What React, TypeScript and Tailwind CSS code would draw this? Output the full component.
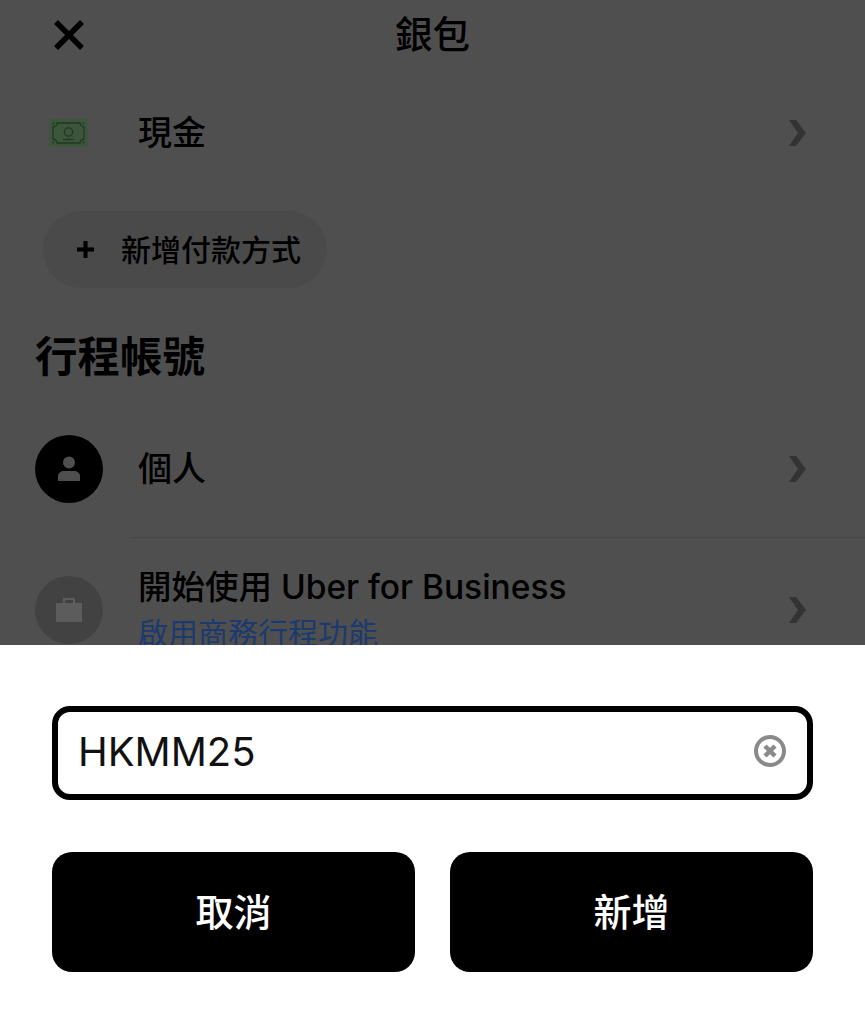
import { X, Plus } from "lucide-react"

const font = { fontFamily: '"Inter", "Noto Sans CJK TC", sans-serif' }

function Chevron() {
  return (
    <svg width="22" height="28" viewBox="0 0 22 28" className="shrink-0">
      <path d="M3 1h7l10 13-10 13H3l9-13z" fill="#333333" />
    </svg>
  )
}

function CashIcon() {
  return (
    <svg width="39" height="28" viewBox="0 0 39 28" className="shrink-0">
      <rect width="39" height="28" fill="#3c553c" />
      <path d="M8 4h23c0 2 1.500 3.500 4 4v12c-2.500 .5-4 2-4 4H8c0-2-1.500-3.500-4-4V8c2.500-.5 4-2 4-4z" fill="none" stroke="#1f3a1f" strokeWidth="1.3" />
      <circle cx="19.500" cy="13" r="4.200" fill="none" stroke="#1f3a1f" strokeWidth="1.300" />
      <path d="M14 20.500h11" stroke="#1f3a1f" strokeWidth="1.300" />
      <g fill="#1f3a1f">
        <circle cx="4.500" cy="4.500" r="1" />
        <circle cx="34.500" cy="4.500" r="1" />
        <circle cx="4.500" cy="23.500" r="1" />
        <circle cx="34.500" cy="23.500" r="1" />
      </g>
    </svg>
  )
}

export default function App() {
  return (
    <div className="w-[865px] h-[1024px] flex flex-col bg-white overflow-hidden" style={font}>
      <div className="h-[645px] bg-[#4f4f4f] overflow-hidden shrink-0 text-black">
        <div className="relative h-[70px] flex items-center justify-center">
          <X className="absolute left-[47px] top-[13px] w-[44px] h-[44px]" strokeWidth={3} strokeLinecap="square" color="#000" />
          <h1 className="text-[37.5px] leading-[70px] font-medium">銀包</h1>
        </div>

        <div className="h-[66px] mt-[30px] flex items-center pl-[49px] pr-[57px]">
          <CashIcon />
          <span className="ml-[50px] text-[34px] leading-none font-medium flex-1">現金</span>
          <Chevron />
        </div>

        <div className="mt-[45px] ml-[43px] w-[284px] h-[77px] rounded-full bg-[#4a4a4a] flex items-center pl-[28px]">
          <Plus className="w-[29px] h-[29px] shrink-0" strokeWidth={3.4} strokeLinecap="butt" color="#000" />
          <span className="ml-[21px] text-[30px] leading-none font-medium whitespace-nowrap">新增付款方式</span>
        </div>

        <h2 className="mt-[39px] ml-[35px] text-[42.5px] leading-[60px] font-bold">行程帳號</h2>

        <div className="mt-[48px] h-[68px] flex items-center pl-[35px] pr-[57px]">
          <div className="w-[68px] h-[68px] rounded-full bg-black flex items-center justify-center shrink-0">
            <svg width="24" height="26" viewBox="0 0 24 26">
              <circle cx="12" cy="6.500" r="6" fill="#4f4f4f" />
              <path d="M1 25v-5c0-3 3-5 6-5h10c3 0 6 2 6 5v5z" fill="#4f4f4f" />
            </svg>
          </div>
          <span className="ml-[35px] text-[34px] leading-none font-medium flex-1">個人</span>
          <Chevron />
        </div>

        <div className="mt-[34px] ml-[130px] h-px bg-[#474747]" />

        <div className="mt-[38px] h-[68px] flex items-center pl-[35px] pr-[57px]">
          <div className="w-[68px] h-[68px] rounded-full bg-[#424242] flex items-center justify-center shrink-0">
            <svg width="26" height="24" viewBox="0 0 26 24">
              <path d="M0 5h7V0h12v5h7v19H0zM9 2v3h8V2z" fill="#5c5c5c" fillRule="evenodd" />
            </svg>
          </div>
          <div className="ml-[35px] flex-1 -mt-[1px]">
            <div className="text-[33.5px] leading-[46px] font-medium whitespace-nowrap">開始使用 Uber for Business</div>
            <div className="text-[30px] leading-[46px] text-[#1c3a6e] whitespace-nowrap">啟用商務行程功能</div>
          </div>
          <Chevron />
        </div>
      </div>

      <div className="flex-1 px-[52px] pt-[61px]">
        <div className="h-[94px] rounded-[18px] border-[6px] border-black flex items-center pl-[20px] pr-[21px]">
          <span className="flex-1 text-[40px] leading-none text-[#111111] -mt-[3px]">HKMM25</span>
          <svg width="32" height="32" viewBox="0 0 32 32" className="shrink-0 -mt-[5px]">
            <circle cx="16" cy="16" r="14" fill="none" stroke="#8a8a8a" strokeWidth="4" />
            <path d="M11 11l10 10M21 11L11 21" stroke="#8a8a8a" strokeWidth="4.500" />
          </svg>
        </div>
        <div className="mt-[52px] grid grid-cols-2 gap-[35px]">
          <button className="h-[120px] rounded-[20px] bg-black text-white text-[38px] font-medium">取消</button>
          <button className="h-[120px] rounded-[20px] bg-black text-white text-[38px] font-medium">新增</button>
        </div>
      </div>
    </div>
  )
}
